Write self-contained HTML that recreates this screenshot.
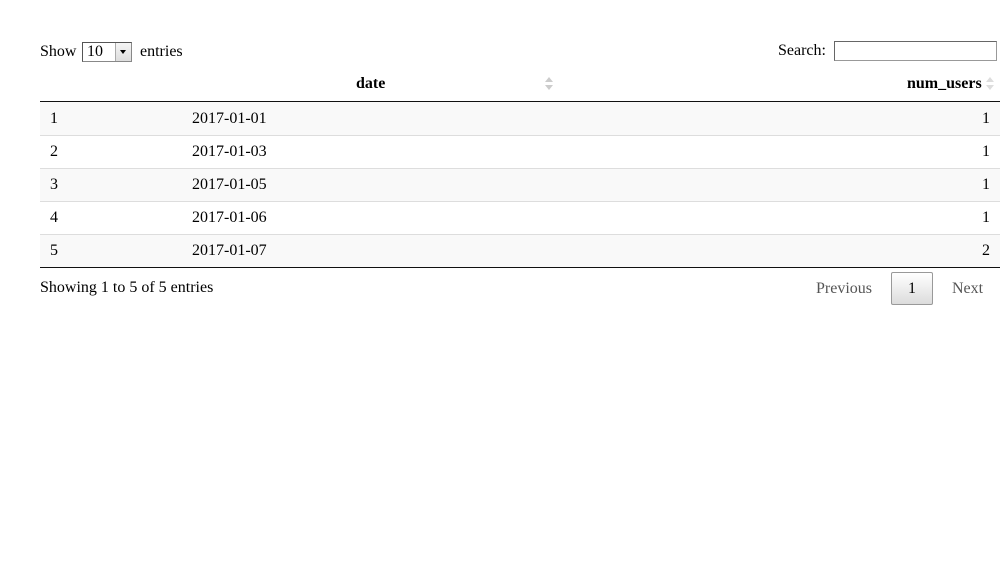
<!DOCTYPE html>
<html><head><style>
body{margin:0;width:1000px;height:580px;background:#fff;font-family:"Liberation Serif",serif;font-size:16px;color:#000;position:relative;overflow:hidden}
.a{position:absolute;white-space:nowrap}
.row{position:absolute;left:40px;width:960px;height:32px;border-top:1px solid #ddd}
.row span{position:absolute;top:7px}
.arr{position:absolute;width:0;height:0;border-left:4px solid transparent;border-right:4px solid transparent}
</style></head><body>
<div class="a" style="left:40px;top:43px">Show</div>
<div class="a" style="left:82px;top:42px;width:48px;height:18px;border:1px solid #888;border-top-color:#555;border-left-color:#555;background:#fff">
 <span style="position:absolute;left:4px;top:0px">10</span>
 <div style="position:absolute;right:0;top:0;width:15px;height:18px;background:linear-gradient(#f5f5f5,#ddd);border-left:1px solid #aaa"><div class="arr" style="left:4px;top:7px;border-top:4px solid #000;border-left-width:3.5px;border-right-width:3.5px"></div></div>
</div>
<div class="a" style="left:140px;top:43px">entries</div>
<div class="a" style="left:778px;top:42px">Search:</div>
<div class="a" style="left:834px;top:41px;width:161px;height:18px;border:1px solid #999;border-top-color:#666;border-left-color:#666"></div>

<div class="a" style="left:356px;top:75px;font-weight:bold">date</div>
<div class="arr" style="left:545px;top:77px;border-bottom:5px solid #ccc"></div>
<div class="arr" style="left:545px;top:85px;border-top:5px solid #ccc"></div>
<div class="a" style="left:907px;top:75px;font-weight:bold">num_users</div>
<div class="arr" style="left:986px;top:77px;border-bottom:5px solid #ddd"></div>
<div class="arr" style="left:986px;top:85px;border-top:5px solid #ddd"></div>
<div class="a" style="left:40px;top:101px;width:960px;height:1px;background:#111"></div>

<div class="row" style="top:102px;border-top:none;height:33px;background:#f9f9f9"><span style="left:10px;top:8px">1</span><span style="left:152px;top:8px">2017-01-01</span><span style="right:10px;top:8px">1</span></div>
<div class="row" style="top:135px"><span style="left:10px">2</span><span style="left:152px">2017-01-03</span><span style="right:10px">1</span></div>
<div class="row" style="top:168px;background:#f9f9f9"><span style="left:10px">3</span><span style="left:152px">2017-01-05</span><span style="right:10px">1</span></div>
<div class="row" style="top:201px"><span style="left:10px">4</span><span style="left:152px">2017-01-06</span><span style="right:10px">1</span></div>
<div class="row" style="top:234px;background:#f9f9f9"><span style="left:10px">5</span><span style="left:152px">2017-01-07</span><span style="right:10px">2</span></div>
<div class="a" style="left:40px;top:267px;width:960px;height:1px;background:#111"></div>

<div class="a" style="left:40px;top:279px">Showing 1 to 5 of 5 entries</div>
<div class="a" style="left:816px;top:280px;color:#555">Previous</div>
<div class="a" style="left:891px;top:272px;width:40px;height:31px;border:1px solid #999;border-radius:2px;background:linear-gradient(#fff,#dcdcdc);text-align:center;line-height:31px">1</div>
<div class="a" style="left:952px;top:280px;color:#555">Next</div>
</body></html>
